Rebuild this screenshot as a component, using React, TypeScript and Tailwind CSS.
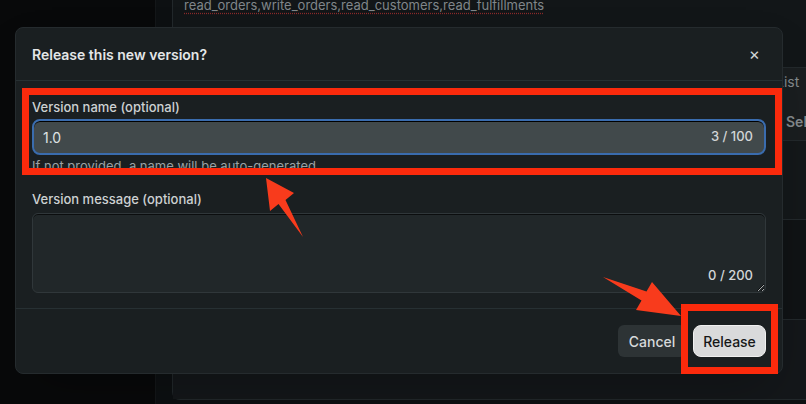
const ReleaseDialog = () => {
  return (
    <div className="absolute left-[15px] top-[27px] flex w-[768px] h-[347px] flex-col rounded-lg border border-[#252b2e] bg-[#1a1f21] shadow-2xl">
      <div className="flex h-[53px] shrink-0 items-center justify-between border-b border-[#273033] pl-[16px] pr-[22px]">
        <h2 className="text-[14px] font-semibold text-[#e4e6e7]">Release this new version?</h2>
        <button className="text-[17px] leading-none text-[#d0d4d5]">×</button>
      </div>

      <div className="flex flex-col border-b border-[#273033] px-[16px] pt-[17px] pb-[15px]">
        <label className="text-[13px] font-medium leading-[18px] text-[#cdd1d2]">Version name (optional)</label>
        <div className="mt-[3px] flex h-[36px] items-center rounded-lg border-2 border-[#3a6cae] bg-[#41494b] pl-[9px] pr-[11px] shadow-[inset_0_1px_0_#000]">
          <input
            readOnly
            value="1.0"
            className="flex-1 bg-transparent text-[14px] text-[#dfe2e3] outline-none"
          />
          <span className="text-[13px] font-medium text-[#d3d6d7]">3 / 100</span>
        </div>
        <p className="mt-[2px] text-[13px] leading-[18px] text-[#9ba1a3]">If not provided, a name will be auto-generated</p>

        <label className="mt-[15px] text-[13px] font-medium leading-[18px] text-[#cdd1d2]">Version message (optional)</label>
        <div className="relative mt-[5px] h-[80px] rounded-md border border-[#30373a] bg-[#212729] shadow-[inset_0_1px_0_#0b0d0e]">
          <textarea className="h-full w-full resize bg-transparent outline-none" />
          <span className="pointer-events-none absolute bottom-[7px] right-[12px] text-[13px] font-medium text-[#d3d6d7]">0 / 200</span>
        </div>
      </div>

      <div className="flex flex-1 items-center justify-end gap-[7px] px-[16px]">
        <button className="h-[32px] w-[68px] rounded-md bg-[#2d3335] text-[14px] font-medium text-[#d7dadb]">Cancel</button>
        <button className="h-[32px] w-[73px] rounded-lg border border-[#f0f0f0] bg-[#d9dadb] text-[14px] font-medium text-[#151718]">Release</button>
      </div>
    </div>
  );
};

const Annotations = () => {
  return (
    <>
      <div className="absolute left-[22px] top-[88px] h-[87px] w-[760px] border-[7px] border-[#fb2a0c]" />
      <div className="absolute left-[681px] top-[304px] h-[70px] w-[97px] border-[7px] border-[#fb2a0c]" />
      <svg className="pointer-events-none absolute left-0 top-0" width="806" height="404" viewBox="0 0 806 404">
        <polygon points="266,178 294,193 285.5,200 303,237 278.5,204 270,211" fill="#f83b1c" />
        <polygon points="681,316 652,282 646.5,291.5 603,277 641.5,300.5 636,310" fill="#f83b1c" />
      </svg>
    </>
  );
};

const App = () => {
  return (
    <div className="relative flex h-[404px] w-[806px] overflow-hidden bg-[#08090a] font-[Inter,sans-serif]">
      <aside className="w-[155px] shrink-0 bg-[#08090a]" />
      <main className="flex flex-1 border-l border-[#141719] bg-[#0d1012] pb-[4px] pl-[16px]">
        <section className="flex flex-1 flex-col rounded-bl-lg border-b border-l border-[#22282b] bg-[#121618]">
          <p className="-mt-[5px] pl-[11px] text-[13px] leading-[20px] text-[#80868a] underline decoration-[#8a2a2a] decoration-dotted underline-offset-[3px]">
            read_orders,write_orders,read_customers,read_fulfillments
          </p>
          <div className="mt-[52px] flex flex-1 flex-col">
            <div className="flex h-[74px] flex-col justify-between border-y border-[#23292c] bg-[#1a1e20] pt-[3px] pb-[8px] pl-[603px]">
              <span className="text-[14px] text-[#858b8e]">List</span>
              <span className="pl-[10px] text-[14px] font-semibold text-[#858b8e]">Select</span>
            </div>
            <div className="h-[79px] border-b border-[#23292c] bg-[#14181a]" />
            <div className="h-[100px] border-b border-[#23292c] bg-[#101315]" />
            <div className="flex-1 bg-[#14171a]" />
          </div>
        </section>
      </main>

      <ReleaseDialog />
      <Annotations />
    </div>
  );
};

export default App;
